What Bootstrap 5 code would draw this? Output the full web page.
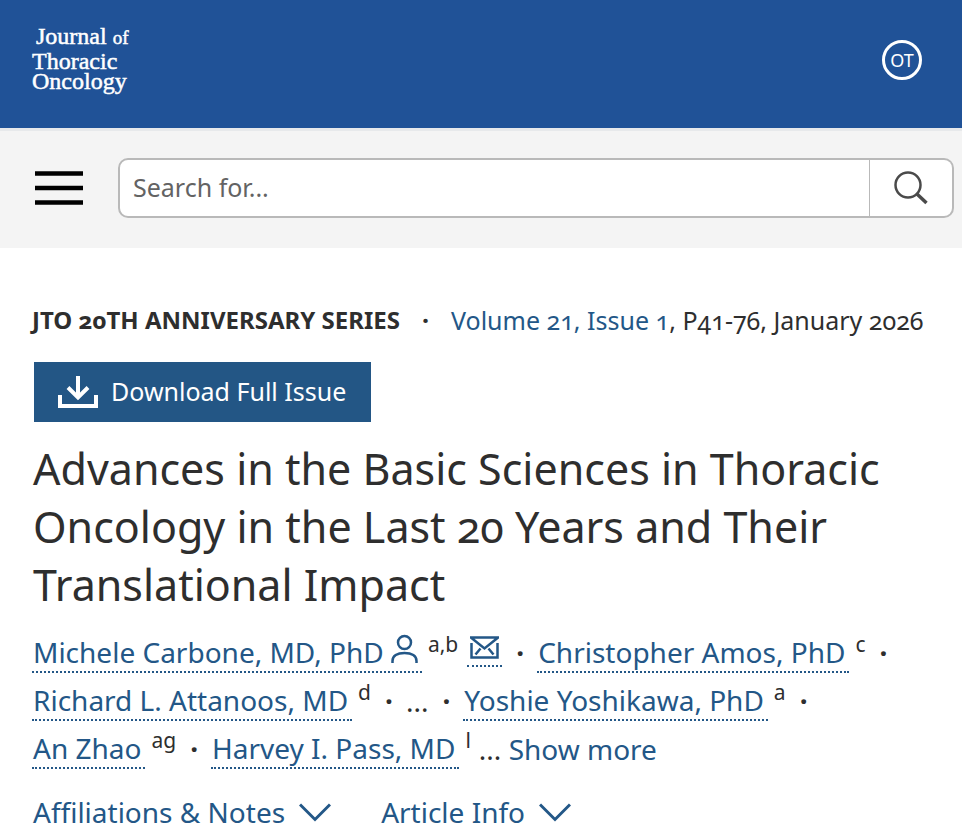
<!DOCTYPE html>
<html lang="en">
<head>
<meta charset="utf-8">
<meta name="viewport" content="width=device-width, initial-scale=1">
<title>Journal of Thoracic Oncology</title>
<link href="https://cdn.jsdelivr.net/npm/bootstrap@5.3.0/dist/css/bootstrap.min.css" rel="stylesheet">
<style>
body{font-family:"Noto Sans","Open Sans",sans-serif;font-size:25px;line-height:36px;color:#2e2e2e;font-variant-numeric:oldstyle-nums}
a,.link-btn{color:#235787;text-decoration:none}
.site-head{background:#205297;min-height:128px;padding:0 40px 8px 32px}
.journal-logo{font-family:"Liberation Serif",serif;font-size:24px;line-height:20px;color:#fff;-webkit-text-stroke:.5px #fff;margin-bottom:7px}
.journal-logo span{display:block}
.journal-logo .first{padding-left:4px;line-height:26px}
.journal-logo small{font-size:19px}
.avatar{width:40px;height:40px;border:3px solid #fff;border-radius:50%;background:none;color:#fff;font-size:18px;line-height:18px}
.search-bar{background:#f4f4f4;border-top:3px solid #e7e9eb;min-height:120px;padding:0 8px 3px 35px;gap:35px}
.search-bar .form-control,.search-bar .btn{height:60px;border:2px solid #b9b9b9;background:#fff;font-size:25px;padding:0 13px 2px;border-radius:10px}
.search-bar .form-control::placeholder{color:#636363}
.search-bar .btn{width:84px;border-left:0}
main{padding:54px 32px 0}
.meta{gap:22px}
.meta strong{font-size:24px}
.dot{font-weight:700}
.download{background:#235685;color:#fff;border:0;border-radius:0;height:60px;padding:0 25px 0 24px;font-size:25px;gap:12px;margin:24px 0 18px 2px}
.download:hover{background:#1b4469;color:#fff}
h1{font-size:43px;line-height:58px;font-weight:400;margin-bottom:16px;padding-left:1px}
.authors{font-size:28px;line-height:46px;column-gap:13px}
.authors li{display:flex;white-space:nowrap;height:48px}
.under{height:43px;line-height:40px;padding:2px 4px 0 1px;border-bottom:2px dotted #235787}
.under svg{display:inline-block;vertical-align:-1px}
.authors sup{font-size:21px;line-height:28px;top:0;margin-left:6px}
.authors .dot{margin-left:14px}
.mail{height:37px;margin-left:9px;border-bottom:2px dotted #235787;padding:0 3px;display:flex;align-items:center}
.link-btn{background:none;border:0;padding:0}
.more-row{font-size:28px;line-height:40px;gap:50px;padding:18px 0 0 1px}
.more-row .link-btn{gap:14px}
</style>
</head>
<body>
<header class="site-head d-flex align-items-center justify-content-between">
<a href="#" class="journal-logo"><span class="first">Journal <small>of</small></span><span>Thoracic</span><span>Oncology</span></a>
<button class="avatar p-0" type="button" aria-label="Account OT">OT</button>
</header>
<form class="search-bar d-flex align-items-center">
<button type="button" class="link-btn d-flex" aria-label="Menu"><svg width="48" height="34" viewBox="0 0 48 34"><path d="M0 2.500h48M0 17h48M0 31.500h48" stroke="#000" stroke-width="4.500"/></svg></button>
<div class="input-group">
<input class="form-control" type="text" placeholder="Search for..." aria-label="Search for">
<button class="btn d-flex align-items-center justify-content-center" type="submit" aria-label="Search"><svg width="36" height="36" viewBox="0 0 36 36" fill="none" stroke="#4a4a4a"><circle cx="15" cy="16" r="12.500" stroke-width="2.500"/><path d="M24 25l9.500 9" stroke-width="3.500"/></svg></button>
</div>
</form>
<main>
<div class="meta d-flex flex-wrap"><strong>JTO 20TH ANNIVERSARY SERIES</strong><span class="dot">·</span><span><a href="#">Volume 21, Issue 1</a>, P41-76, January 2026</span></div>
<button type="button" class="download btn d-inline-flex align-items-center"><svg width="41" height="34" viewBox="0 0 41 34" fill="none" stroke="#fff" stroke-width="4"><path d="M2 20v11h36V20M20 1v21M10 12.500L20 22.500 30 12.500"/></svg>Download Full Issue</button>
<h1>Advances in the Basic Sciences in Thoracic Oncology in the Last 20 Years and Their Translational Impact</h1>
<ul class="authors list-unstyled d-flex flex-wrap mb-0">
<li><a href="#" class="under">Michele Carbone, MD, PhD <svg width="27" height="30" viewBox="0 0 27 30" fill="none" stroke="#235787" stroke-width="2.500"><circle cx="13.500" cy="8.500" r="6.500"/><path d="M1.500 29v-2C1.500 22 6 19 13.500 19S25.500 22 25.500 27v2"/></svg></a><sup>a,b</sup><a href="#" class="mail" aria-label="Email Michele Carbone"><svg width="29" height="23" viewBox="0 0 29 23" fill="none" stroke="#235787" stroke-width="2.500"><path d="M0 1.500h29M1.500 2L14.500 12.500 27.500 2M1.500 7v14.500h26V7M5.500 18.500l5-6M23.500 18.500l-5-6"/></svg></a><span class="dot">·</span></li>
<li><a href="#" class="under">Christopher Amos, PhD</a><sup>c</sup><span class="dot">·</span></li>
<li><a href="#" class="under">Richard L. Attanoos, MD</a><sup>d</sup><span class="dot">·</span></li>
<li>...<span class="dot">·</span></li>
<li><a href="#" class="under">Yoshie Yoshikawa, PhD</a><sup>a</sup><span class="dot">·</span></li>
<li><a href="#" class="under">An Zhao</a><sup>ag</sup><span class="dot">·</span></li>
<li><a href="#" class="under">Harvey I. Pass, MD</a><sup>l</sup><span class="ms-2">... <button type="button" class="link-btn">Show more</button></span></li>
</ul>
<div class="more-row d-flex">
<button type="button" class="link-btn d-flex align-items-center">Affiliations &amp; Notes<svg width="32" height="19" viewBox="0 0 32 19" fill="none" stroke="#235787" stroke-width="3"><path d="M1 1.500l15 15 15-15"/></svg></button>
<button type="button" class="link-btn d-flex align-items-center">Article Info<svg width="32" height="19" viewBox="0 0 32 19" fill="none" stroke="#235787" stroke-width="3"><path d="M1 1.500l15 15 15-15"/></svg></button>
</div>
</main>
<script src="https://cdn.jsdelivr.net/npm/bootstrap@5.3.0/dist/js/bootstrap.bundle.min.js"></script>
</body>
</html>
